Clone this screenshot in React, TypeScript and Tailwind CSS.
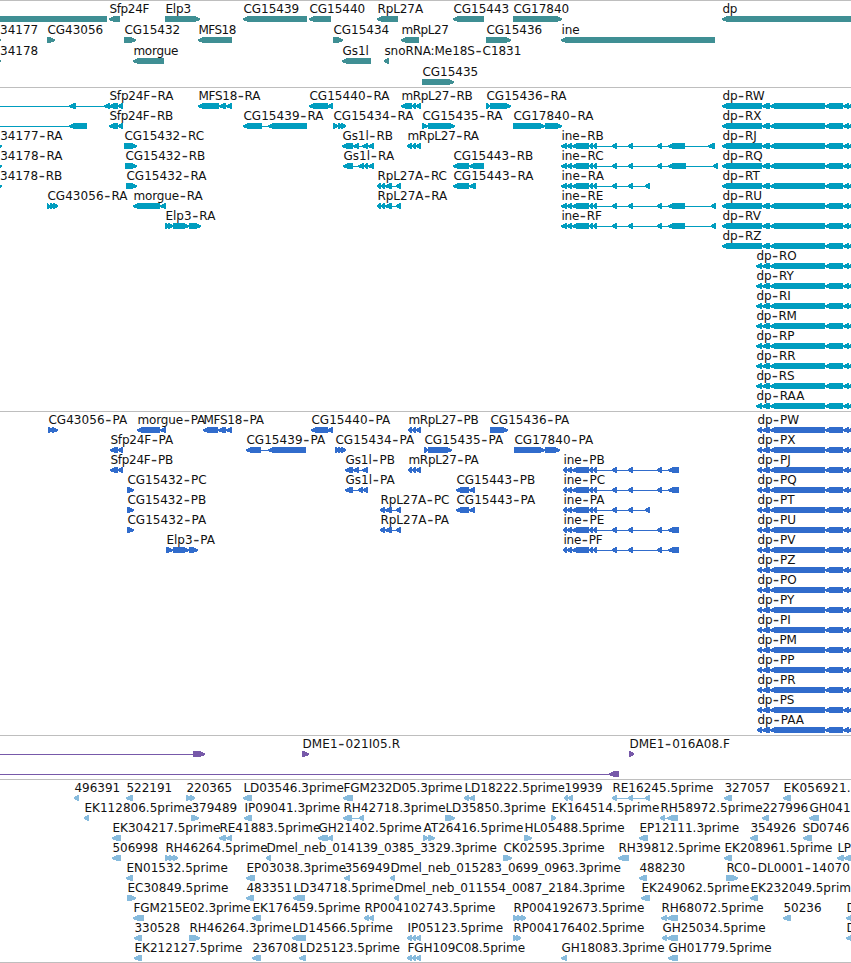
type Strand = '<' | '>' | '=';
// row, label x, label, strand, exon ranges
type Feature = [number, number, string, Strand, string];

interface TrackData {
    id: string;
    color: string;
    height: number;
    rowHeight: number;
    features: Feature[];
}

const INE = '567-572 572-589 589-593 593-597 612-617 628-633';
const DP_TAIL = '770-825 825-843 843-849 848-856';

const genes: Feature[] = [
    [0, -60, '', '=', '-10-107'],
    [0, 109, 'Sfp24F', '<', '109-120'],
    [0, 165, 'Elp3', '>', '165-200'],
    [0, 243, 'CG15439', '<', '243-307'],
    [0, 309, 'CG15440', '<', '309-331'],
    [0, 377, 'RpL27A', '<', '377-398'],
    [0, 453, 'CG15443', '<', '453-484'],
    [0, 513, 'CG17840', '>', '513-562'],
    [0, 722, 'dp', '<', '722-860'],
    [1, -18, 'CG34177', '>', '-8-1'],
    [1, 47, 'CG43056', '>', '47-55'],
    [1, 124, 'CG15432', '>', '124-136'],
    [1, 198, 'MFS18', '<', '198-232'],
    [1, 333, 'CG15434', '>', '333-343'],
    [1, 401, 'mRpL27', '<', '401-419'],
    [1, 486, 'CG15436', '>', '486-511'],
    [1, 561, 'ine', '<', '561-715'],
    [2, -18, 'CG34178', '>', '-8-1'],
    [2, 133, 'morgue', '<', '133-164'],
    [2, 342, 'Gs1l', '<', '342-371'],
    [2, 384, 'snoRNA:Me18S-C1831', '<', '384-389'],
    [3, 422, 'CG15435', '>', '422-454'],
];

const transcripts: Feature[] = [
    [0, 109, 'Sfp24F-RA', '<', '-20--10 69-76 104-110 109-118 118-123'],
    [0, 198, 'MFS18-RA', '<', '198-219 219-226 226-232'],
    [0, 309, 'CG15440-RA', '<', '309-328 327-333'],
    [0, 401, 'mRpL27-RB', '<', '401-412 412-416 416-421'],
    [0, 486, 'CG15436-RA', '>', '486-490 490-511'],
    [1, -60, '', '<', '-20--10 69-87'],
    [1, 109, 'Sfp24F-RB', '<', '109-118 118-123'],
    [1, 243, 'CG15439-RA', '<', '243-262 268-307'],
    [1, 333, 'CG15434-RA', '>', '333-338 338-342 341-346'],
    [1, 422, 'CG15435-RA', '>', '422-428 428-455'],
    [1, 513, 'CG17840-RA', '>', '513-545 545-562'],
    [2, -18, 'CG34177-RA', '>', '-8-2'],
    [2, 124, 'CG15432-RC', '>', '124-128 126-137'],
    [2, 342, 'Gs1l-RB', '<', '342-353 353-359 362-368 368-374'],
    [2, 407, 'mRpL27-RA', '<', '407-412 412-416 416-421'],
    [2, 561, 'ine-RB', '<', `561-567 ${INE} 657-662 668-685 708-715`],
    [3, -18, 'CG34178-RA', '>', '-8-2'],
    [3, 125, 'CG15432-RB', '>', '125-137'],
    [3, 343, 'Gs1l-RA', '<', '343-353 358-364 364-368 368-374'],
    [3, 453, 'CG15443-RB', '<', '453-469 469-484'],
    [3, 561, 'ine-RC', '<', `561-567 ${INE} 657-662 668-686 713-718`],
    [4, -18, 'CG34178-RB', '>', '-8-2'],
    [4, 126, 'CG15432-RA', '>', '126-137'],
    [4, 377, 'RpL27A-RC', '<', '377-381 381-385 385-392 396-401'],
    [4, 453, 'CG15443-RA', '<', '453-469 469-476'],
    [4, 561, 'ine-RA', '<', `561-567 ${INE} 645-650`],
    [5, 47, 'CG43056-RA', '>', '47-50 50-54 53-58'],
    [5, 133, 'morgue-RA', '<', '133-160 160-166'],
    [5, 377, 'RpL27A-RA', '<', '377-381 381-385 385-392 396-401'],
    [5, 561, 'ine-RE', '<', `561-567 ${INE} 657-662 668-685 711-716`],
    [6, 165, 'Elp3-RA', '>', '165-169 168-173 173-189 189-201'],
    [6, 561, 'ine-RF', '<', `561-567 ${INE} 657-662 668-685 711-716`],
    ...['RW', 'RX', 'RJ', 'RQ', 'RT', 'RU', 'RV', 'RZ'].map(
        (id, i): Feature => [i, 722, `dp-${id}`, '<', `722-762 762-770 ${DP_TAIL}`],
    ),
    ...['RO', 'RY', 'RI', 'RM', 'RP', 'RR', 'RS', 'RAA'].map(
        (id, i): Feature => [i + 8, 756, `dp-${id}`, '<', `756-762 762-770 ${DP_TAIL}`],
    ),
];

const proteins: Feature[] = [
    [0, 48, 'CG43056-PA', '>', '48-53 52-58'],
    [0, 137, 'morgue-PA', '<', '137-160 160-166'],
    [0, 203, 'MFS18-PA', '<', '203-218 218-226 226-232'],
    [0, 311, 'CG15440-PA', '<', '311-328 327-333'],
    [0, 408, 'mRpL27-PB', '<', '408-412 412-416 416-421'],
    [0, 490, 'CG15436-PA', '>', '490-508'],
    [1, 110, 'Sfp24F-PA', '<', '110-118 118-123'],
    [1, 246, 'CG15439-PA', '<', '246-261 268-306'],
    [1, 335, 'CG15434-PA', '>', '335-339 338-342 341-346'],
    [1, 424, 'CG15435-PA', '>', '424-428 428-452'],
    [1, 514, 'CG17840-PA', '>', '514-545 545-560'],
    [2, 110, 'Sfp24F-PB', '<', '110-118 118-123'],
    [2, 345, 'Gs1l-PB', '<', '345-353 353-359 362-368'],
    [2, 408, 'mRpL27-PA', '<', '408-412 412-416 416-421'],
    [2, 563, 'ine-PB', '<', `563-567 ${INE} 657-662 668-679`],
    [3, 127, 'CG15432-PC', '>', '127-134'],
    [3, 345, 'Gs1l-PA', '<', '345-353 358-363 363-368'],
    [3, 456, 'CG15443-PB', '<', '456-469 469-475'],
    [3, 563, 'ine-PC', '<', `563-567 ${INE} 657-662 668-679`],
    [4, 127, 'CG15432-PB', '>', '127-134'],
    [4, 380, 'RpL27A-PC', '<', '380-385 385-392 396-401'],
    [4, 456, 'CG15443-PA', '<', '456-469 469-475'],
    [4, 563, 'ine-PA', '<', `563-567 ${INE} 645-650`],
    [5, 127, 'CG15432-PA', '>', '127-134'],
    [5, 380, 'RpL27A-PA', '<', '380-385 385-392 396-401'],
    [5, 563, 'ine-PE', '<', `563-567 ${INE} 657-662 668-679`],
    [6, 166, 'Elp3-PA', '>', '166-173 173-189 189-198'],
    [6, 563, 'ine-PF', '<', `563-567 ${INE} 657-662 668-679`],
    ...['PW', 'PX', 'PJ', 'PQ', 'PT', 'PU', 'PV', 'PZ', 'PO', 'PY', 'PI', 'PM', 'PP', 'PR', 'PS', 'PAA'].map(
        (id, i): Feature => [i, 757, `dp-${id}`, '<', `757-762 762-770 ${DP_TAIL}`],
    ),
];

const clones: Feature[] = [
    [0, -60, '', '>', '-20--10 193-205'],
    [0, 302, 'DME1-021I05.R', '>', '302-309'],
    [0, 629, 'DME1-016A08.F', '>', '629-634'],
    [1, -60, '', '<', '-20--10 609-619'],
];

const ests: Feature[] = [
    [0, 74, '496391', '<', '74-79'],
    [0, 126, '522191', '<', '126-133'],
    [0, 186, '220365', '>', '186-191 190-195'],
    [0, 243, 'LD03546.3prime', '<', '243-252'],
    [0, 343, 'FGM232D05.3prime', '<', '343-353'],
    [0, 464, 'LD18222.5prime', '<', '464-469 469-475'],
    [0, 564, '19939', '<', '564-568 568-573'],
    [0, 612, 'RE16245.5prime', '<', '612-617 628-633 645-650'],
    [0, 724, '327057', '<', '724-732'],
    [0, 783, 'EK056921.', '<', '783-791'],
    [1, 84, 'EK112806.5prime', '<', '84-89'],
    [1, 191, '379489', '>', '191-199'],
    [1, 244, 'IP09041.3prime', '<', '244-252'],
    [1, 343, 'RH42718.3prime', '<', '343-352 359-364'],
    [1, 445, 'LD35850.3prime', '>', '445-455'],
    [1, 551, 'EK164514.5prime', '>', '551-556'],
    [1, 660, 'RH58972.5prime', '<', '660-665 667-678'],
    [1, 762, '227996', '<', '762-769'],
    [1, 809, 'GH041', '<', '809-819'],
    [2, 112, 'EK304217.5prime', '<', '112-121'],
    [2, 219, 'RE41883.5prime', '<', '219-226 226-232'],
    [2, 318, 'GH21402.5prime', '<', '318-328 327-333'],
    [2, 423, 'AT26416.5prime', '>', '423-428 428-435'],
    [2, 524, 'HL05488.5prime', '>', '524-532'],
    [2, 639, 'EP12111.3prime', '<', '639-648'],
    [2, 750, '354926', '<', '750-758'],
    [2, 802, 'SD0746', '<', '803-812'],
    [3, 112, '506998', '<', '112-121'],
    [3, 165, 'RH46264.5prime', '>', '165-170 169-174 173-178'],
    [3, 266, 'Dmel_neb_014139_0385_3329.3prime', '<', '266-271'],
    [3, 503, 'CK02595.3prime', '>', '503-512'],
    [3, 618, 'RH39812.5prime', '<', '618-629'],
    [3, 724, 'EK208961.5prime', '<', '724-732'],
    [3, 837, 'LP', '<', '837-844 844-852'],
    [4, 126, 'EN01532.5prime', '<', '126-133'],
    [4, 246, 'EP03038.3prime', '<', '246-255'],
    [4, 344, '356949', '<', '344-350'],
    [4, 390, 'Dmel_neb_015283_0699_0963.3prime', '<', '390-395'],
    [4, 639, '488230', '<', '639-647'],
    [4, 726, 'RC0-DL0001-14070', '>', '726-738'],
    [5, 127, 'EC30849.5prime', '>', '127-136'],
    [5, 246, '483351', '<', '246-254'],
    [5, 293, 'LD34718.5prime', '<', '293-305'],
    [5, 394, 'Dmel_neb_011554_0087_2184.3prime', '<', '394-399'],
    [5, 641, 'EK249062.5prime', '<', '641-650'],
    [5, 750, 'EK232049.5prime', '<', '750-758'],
    [6, 133, 'FGM215E02.3prime', '<', '133-144'],
    [6, 252, 'EK176459.5prime', '<', '252-261'],
    [6, 364, 'RP004102743.5prime', '<', '364-369 369-374'],
    [6, 513, 'RP004192673.5prime', '>', '513-518 517-522 521-526'],
    [6, 661, 'RH68072.5prime', '<', '661-667 667-678'],
    [6, 783, '50236', '<', '783-791'],
    [6, 846, 'D', '<', '846-854'],
    [7, 134, '330528', '<', '134-142'],
    [7, 189, 'RH46264.3prime', '>', '189-200'],
    [7, 292, 'LD14566.5prime', '<', '292-306'],
    [7, 407, 'IP05123.5prime', '<', '407-412 412-416 416-421'],
    [7, 513, 'RP004176402.5prime', '>', '513-517 516-521'],
    [7, 662, 'GH25034.5prime', '<', '662-667 667-678'],
    [7, 846, 'D', '<', '846-854'],
    [8, 134, 'EK212127.5prime', '<', '134-142'],
    [8, 252, '236708', '<', '252-261'],
    [8, 299, 'LD25123.5prime', '<', '299-306'],
    [8, 407, 'FGH109C08.5prime', '<', '407-412 412-416 416-421'],
    [8, 561, 'GH18083.3prime', '<', '561-567'],
    [8, 668, 'GH01779.5prime', '<', '668-678'],
];

const tracks: TrackData[] = [
    { id: 'genes', color: '#3f8f94', height: 86, rowHeight: 21, features: genes },
    { id: 'transcripts', color: '#009dbf', height: 323, rowHeight: 20, features: transcripts },
    { id: 'proteins', color: '#316ccc', height: 323, rowHeight: 20, features: proteins },
    { id: 'clones', color: '#7759a9', height: 43, rowHeight: 20, features: clones },
    { id: 'ests', color: '#87bbdd', height: 182, rowHeight: 20, features: ests },
];

// Width corrections in px, spread over the whole label as letter spacing
const KERN: Record<string, number> = { m: -1.5, F: -1, S: -0.5, M: -1, p: -0.5, L: -0.5, A: 0.5, B: -0.3, '.': 2.4 };

function labelSpacing(label: string) {
    const total = [...label].reduce((sum, char) => sum + (KERN[char] ?? 0), 0);
    return total / label.length;
}

function parseExons(ranges: string) {
    return ranges.split(' ').map((range) => {
        const match = range.match(/^(-?\d+)-(-?\d+)$/)!;
        return [Number(match[1]), Number(match[2])];
    });
}

function exonPoints(start: number, end: number, strand: Strand) {
    if (strand === '=') return `${start},0 ${end},0 ${end},6 ${start},6`;
    const width = end - start;
    const head = width > 5 ? 5 : width - 1;
    if (strand === '<') {
        return `${start},2.4 ${start + head},0 ${end},0 ${end},6 ${start + head},6 ${start},4`;
    }
    return `${end},2.4 ${end - head},0 ${start},0 ${start},6 ${end - head},6 ${end},4`;
}

function Label({ x, label }: { x: number; label: string }) {
    const [head, ...rest] = label.split('-');

    return (
        <text x={x + 0.4} y={-3} letterSpacing={labelSpacing(label)} className="fill-[#111] text-[12px]">
            {head}
            {rest.map((part, idx) => (
                <tspan key={idx}>
                    <tspan dx={0.6} dy={1} className="fill-[#333] text-[17px]">-</tspan>
                    <tspan dx={1} dy={-1}>{part}</tspan>
                </tspan>
            ))}
        </text>
    );
}

function Glyph({ feature, rowHeight }: { feature: Feature; rowHeight: number }) {
    const [row, x, label, strand, ranges] = feature;
    const exons = parseExons(ranges);
    const first = exons[0][0];
    const last = exons[exons.length - 1][1];

    return (
        <g transform={`translate(0 ${row * rowHeight + 15})`}>
            <g shapeRendering="crispEdges">
                {exons.length > 1 && <rect x={first} y={3} width={last - first} height={1} />}
                {exons.map(([start, end], idx) => (
                    <polygon key={idx} points={exonPoints(start, end, strand)} />
                ))}
            </g>
            {label && <Label x={x} label={label} />}
        </g>
    );
}

function Track({ track }: { track: TrackData }) {
    return (
        <section className="border-t border-[#bebebe]">
            <svg width={851} height={track.height} fill={track.color} className="block overflow-hidden">
                {track.features.map((feature, idx) => (
                    <Glyph key={idx} feature={feature} rowHeight={track.rowHeight} />
                ))}
            </svg>
        </section>
    );
}

export default function App() {
    return (
        <main className="flex w-[851px] flex-col overflow-hidden border-b border-[#bebebe] bg-white font-['DejaVu_Sans',sans-serif]">
            {tracks.map((track) => (
                <Track key={track.id} track={track} />
            ))}
        </main>
    );
}
